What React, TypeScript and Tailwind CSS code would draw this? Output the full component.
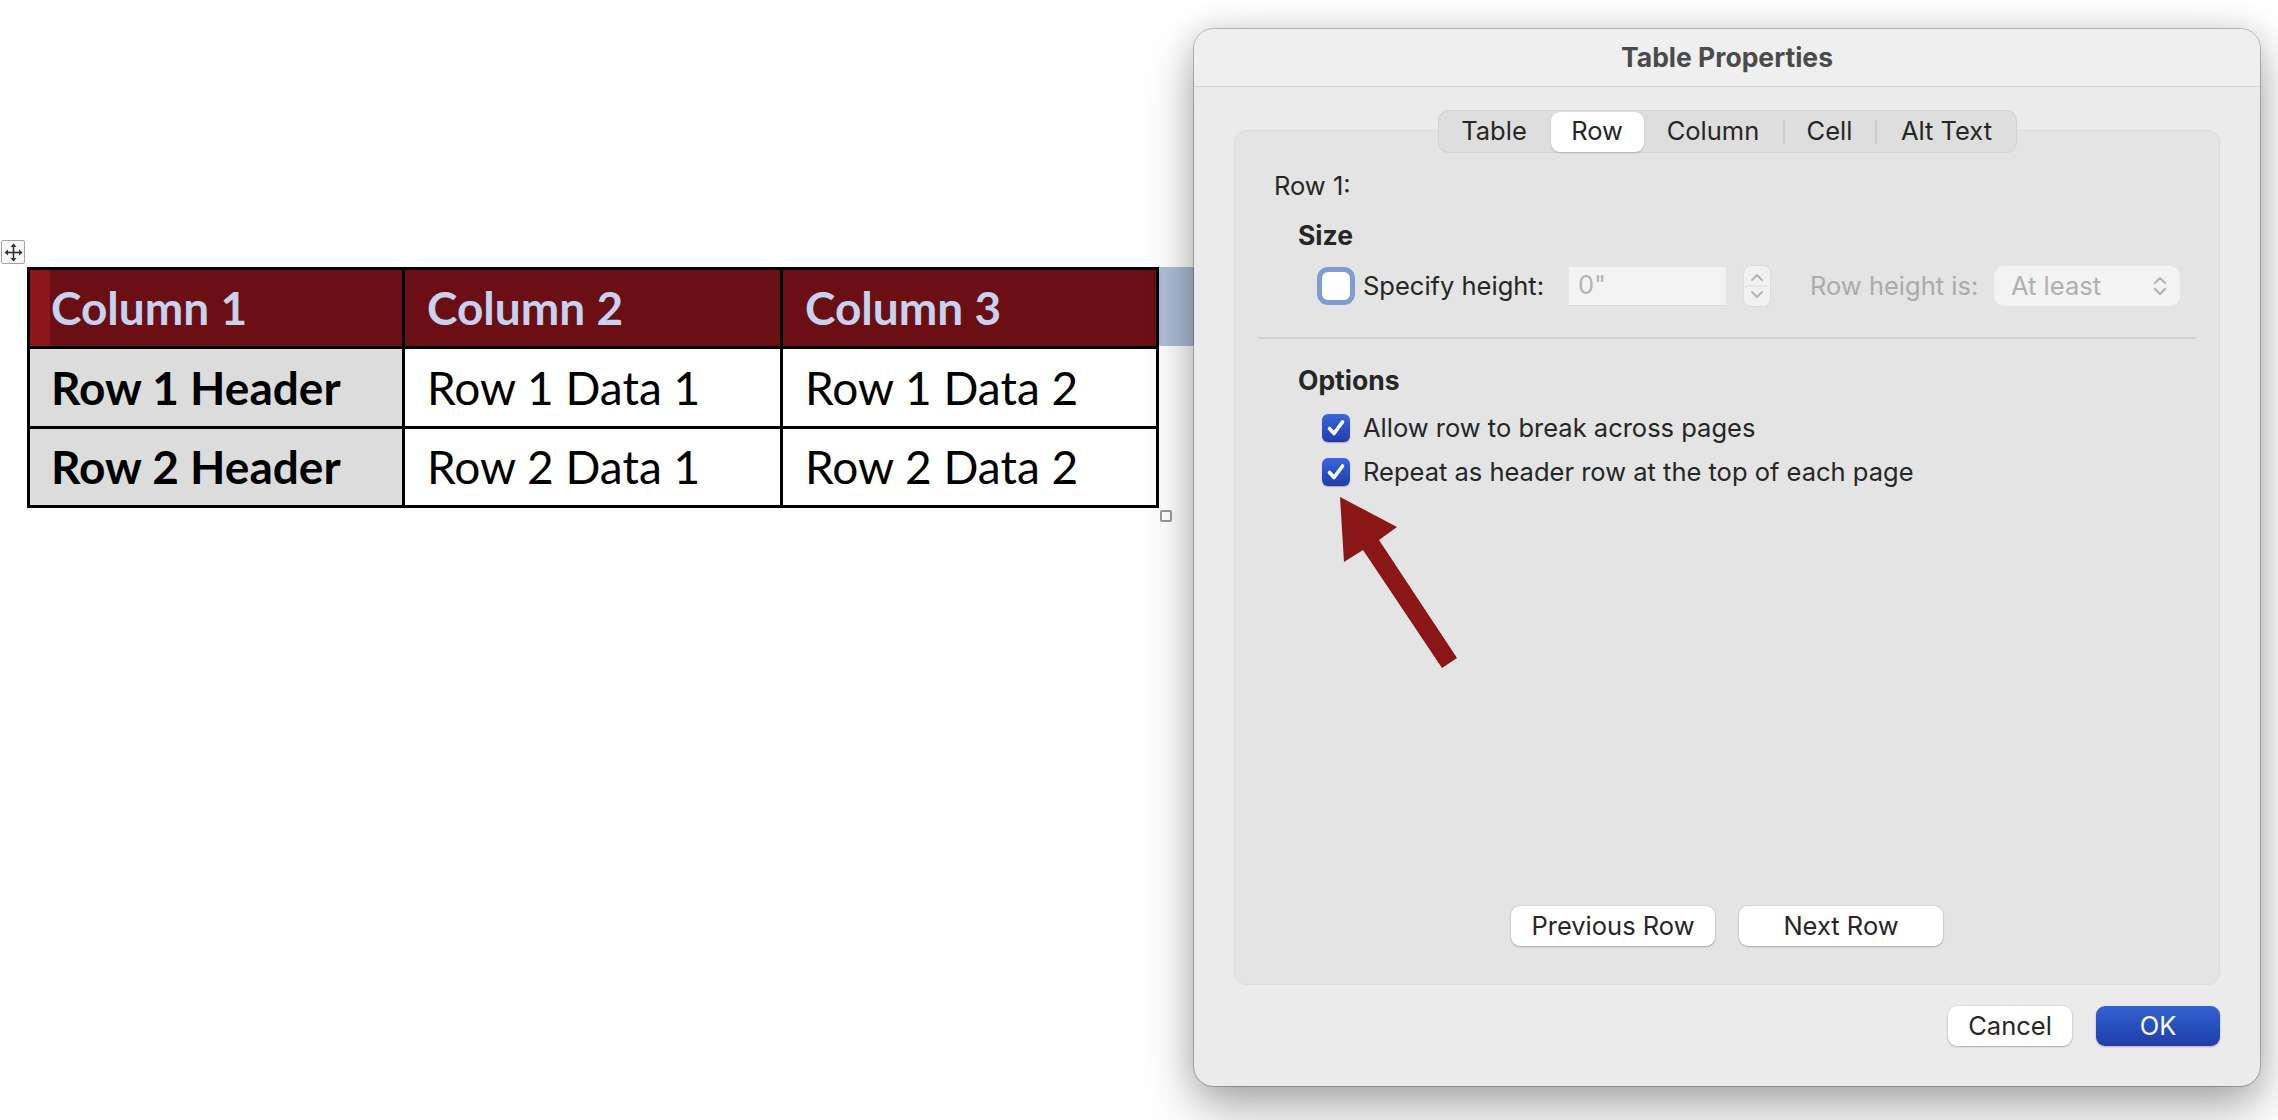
import React from "react";

function MoveIcon() {
  return (
    <svg width="19" height="19" viewBox="0 0 19 19">
      <line x1="9.5" y1="3" x2="9.5" y2="16" stroke="#333" strokeWidth="1.6" />
      <line x1="3" y1="9.5" x2="16" y2="9.5" stroke="#333" strokeWidth="1.6" />
      <polygon points="9.5,0.5 6.5,4 12.5,4" fill="#333" />
      <polygon points="9.5,18.5 6.5,15 12.5,15" fill="#333" />
      <polygon points="0.5,9.5 4,6.5 4,12.5" fill="#333" />
      <polygon points="18.5,9.5 15,6.5 15,12.5" fill="#333" />
    </svg>
  );
}

function Check() {
  return (
    <div className="w-[28px] h-[28px] rounded-[6px] bg-gradient-to-b from-[#3A66DA] to-[#1F3DAE] shadow-[0_1px_1px_rgba(0,0,0,0.25)] flex items-center justify-center shrink-0">
      <svg width="28" height="28" viewBox="0 0 28 28">
        <polyline points="7.5,14.5 12,19.5 20.5,8" fill="none" stroke="white" strokeWidth="3.6" strokeLinecap="round" strokeLinejoin="round" />
      </svg>
    </div>
  );
}

function Dialog() {
  return (
    <div className="absolute left-[1194px] top-[29px] w-[1066px] h-[1057px] rounded-[20px] bg-[#EBEBEB] shadow-[0_0_0_1px_rgba(0,0,0,0.22),0_22px_50px_rgba(0,0,0,0.32),0_0_30px_rgba(0,0,0,0.12)] flex flex-col font-['Inter',sans-serif] text-[25.5px] text-[#262626] overflow-hidden">
      <div className="h-[58px] shrink-0 flex items-center justify-center bg-[#EFEFEF] border-b border-[#D6D6D6] font-bold text-[26.5px] text-[#4B4B4B]">
        Table Properties
      </div>
      <div className="flex-1 flex flex-col px-[40px]">
        <div className="mt-[23px] relative z-10 flex justify-center">
          <div className="flex h-[43px] items-center rounded-[11px] bg-[#DEDEDE] shadow-[inset_0_0_0_1px_#D3D3D3]">
            <div className="w-[113px] h-full flex items-center justify-center">Table</div>
            <div className="w-[93px] h-[40px] flex items-center justify-center bg-white rounded-[9px] shadow-[0_1px_2px_rgba(0,0,0,0.18)]">Row</div>
            <div className="w-[139px] h-full flex items-center justify-center">Column</div>
            <div className="w-[2px] h-[24px] bg-[#CDCDCD]" />
            <div className="w-[90px] h-full flex items-center justify-center">Cell</div>
            <div className="w-[2px] h-[24px] bg-[#CDCDCD]" />
            <div className="w-[140px] h-full flex items-center justify-center">Alt Text</div>
          </div>
        </div>
        <div className="-mt-[23px] h-[855px] shrink-0 rounded-[12px] bg-[#E4E4E4] border border-[#DBDBDB] flex flex-col pt-[39px] px-[23px] pb-[38px]">
          <div className="h-[32px] flex items-center pl-[16px]">Row 1:</div>
          <div className="mt-[18px] h-[32px] flex items-center pl-[40px] font-bold text-[26.5px]">Size</div>
          <div className="mt-[14px] h-[40px] flex items-center pl-[64px]">
            <div className="w-[28px] h-[28px] rounded-[6px] bg-white shadow-[0_0_0_5px_#7F9DD2] shrink-0" />
            <div className="ml-[13px] w-[206px] shrink-0">Specify height:</div>
            <div className="w-[157px] h-[39px] bg-[#F3F3F3] border-b border-[#D8D8D8] flex items-center pl-[9px] text-[#B5B5B5] shrink-0">0"</div>
            <div className="ml-[18px] w-[26px] h-[40px] rounded-[7px] bg-[#F1F1F1] shadow-[0_0_0_1px_#DCDCDC] shrink-0">
              <svg width="26" height="40" viewBox="0 0 26 40">
                <polyline points="8,14 13,9 18,14" fill="none" stroke="#B3B3B3" strokeWidth="2" strokeLinecap="round" strokeLinejoin="round" />
                <line x1="1" y1="20" x2="25" y2="20" stroke="#DCDCDC" strokeWidth="1" />
                <polyline points="8,26 13,31 18,26" fill="none" stroke="#B3B3B3" strokeWidth="2" strokeLinecap="round" strokeLinejoin="round" />
              </svg>
            </div>
            <div className="ml-[40px] w-[184px] text-[#ABABAB] shrink-0">Row height is:</div>
            <div className="w-[186px] h-[40px] rounded-[10px] bg-[#F3F3F3] flex items-center justify-between pl-[17px] pr-[13px] text-[#B0B0B0] shrink-0">
              <span>At least</span>
              <svg width="14" height="24" viewBox="0 0 14 24">
                <polyline points="2,9 7,4 12,9" fill="none" stroke="#B3B3B3" strokeWidth="2.2" strokeLinecap="round" strokeLinejoin="round" />
                <polyline points="2,15 7,20 12,15" fill="none" stroke="#B3B3B3" strokeWidth="2.2" strokeLinecap="round" strokeLinejoin="round" />
              </svg>
            </div>
          </div>
          <div className="mt-[31px] h-[2px] bg-[#D2D2D2]" />
          <div className="mt-[26px] h-[32px] flex items-center pl-[40px] font-bold text-[26.5px]">Options</div>
          <div className="mt-[15px] h-[32px] flex items-center pl-[64px]">
            <Check />
            <span className="ml-[13px]">Allow row to break across pages</span>
          </div>
          <div className="mt-[12px] h-[32px] flex items-center pl-[64px]">
            <Check />
            <span className="ml-[13px]">Repeat as header row at the top of each page</span>
          </div>
          <div className="mt-auto flex justify-center gap-[24px]">
            <div className="w-[204px] h-[40px] rounded-[9px] bg-white shadow-[0_1px_2px_rgba(0,0,0,0.22),0_0_0_1px_rgba(0,0,0,0.05)] flex items-center justify-center">Previous Row</div>
            <div className="w-[204px] h-[40px] rounded-[9px] bg-white shadow-[0_1px_2px_rgba(0,0,0,0.22),0_0_0_1px_rgba(0,0,0,0.05)] flex items-center justify-center">Next Row</div>
          </div>
        </div>
        <div className="mt-[21px] flex justify-end gap-[24px]">
          <div className="w-[124px] h-[40px] rounded-[9px] bg-white shadow-[0_1px_2px_rgba(0,0,0,0.22),0_0_0_1px_rgba(0,0,0,0.05)] flex items-center justify-center">Cancel</div>
          <div className="w-[124px] h-[40px] rounded-[9px] bg-gradient-to-b from-[#3262D0] to-[#1F3DAA] shadow-[0_1px_2px_rgba(0,0,0,0.25)] flex items-center justify-center text-white">OK</div>
        </div>
      </div>
    </div>
  );
}

export default function App() {
  const head = "bg-[#6B0F15] text-[#C6D3EE] font-bold flex items-center";
  const rowHead = "bg-[#DCDCDC] text-black font-bold flex items-center pl-[21px]";
  const data = "bg-white text-black flex items-center pl-[22px]";
  return (
    <div className="relative w-[2278px] h-[1120px] overflow-hidden bg-white">
      <div className="pl-[27px] pt-[267px]">
        <div className="relative w-[1132px]">
          <div className="absolute left-[-26px] top-[-27px] w-[24px] h-[24px] border-[1.5px] border-[#A3A3A3] rounded-[2px] bg-[#F7F7F7] flex items-center justify-center">
            <MoveIcon />
          </div>
          <div className="grid grid-cols-[372px_375px_373px] grid-rows-[76px_77px_76px] gap-[3px] border-[3px] border-black bg-black font-['Lato',sans-serif] text-[46px] leading-none">
            <div className={head}>
              <div className="w-[20px] h-full bg-[#8B1719]" />
              <span className="pl-[1px]">Column 1</span>
            </div>
            <div className={head + " pl-[22px]"}>Column 2</div>
            <div className={head + " pl-[22px]"}>Column 3</div>
            <div className={rowHead}>Row 1 Header</div>
            <div className={data}>Row 1 Data 1</div>
            <div className={data}>Row 1 Data 2</div>
            <div className={rowHead}>Row 2 Header</div>
            <div className={data}>Row 2 Data 1</div>
            <div className={data}>Row 2 Data 2</div>
          </div>
          <div className="absolute left-[1132px] top-[0px] w-[70px] h-[79px] bg-[#B0BED7]" />
          <div className="absolute left-[1133px] top-[243px] w-[12px] h-[12px] border-[2px] border-[#9A9A9A] rounded-[2px] bg-white" />
        </div>
      </div>
      <svg className="absolute left-0 top-0 z-20 pointer-events-none" width="2278" height="1120">
        <polygon points="1340,497 1397,527 1379,540 1457,658 1442,668 1363,550 1344,562" fill="#8B1616" />
      </svg>
      <Dialog />
    </div>
  );
}
